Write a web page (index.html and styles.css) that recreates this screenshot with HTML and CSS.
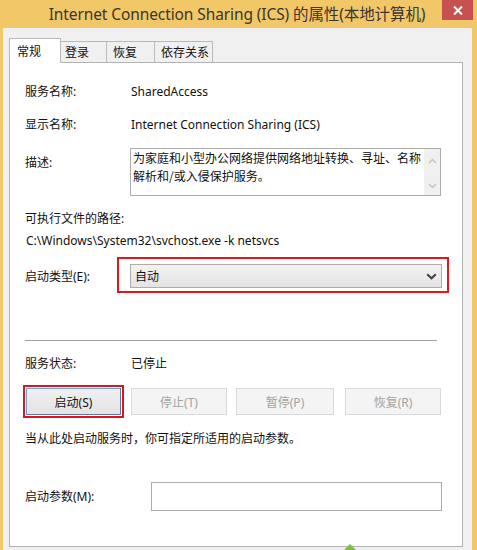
FILE: index.html
```html
<!DOCTYPE html>
<html lang="zh-CN">
<head>
<meta charset="utf-8">
<title>Internet Connection Sharing (ICS) 的属性(本地计算机)</title>
<link rel="stylesheet" href="styles.css">
</head>
<body>
<div class="window">
  <div class="titlebar">
    <div class="title">Internet Connection Sharing (ICS) 的属性(本地计算机)</div>
    <div class="close">
      <svg width="10" height="9" viewBox="0 0 10 9"><path d="M1 0.5 L9 8.5 M9 0.5 L1 8.5" stroke="#fff" stroke-width="2" fill="none"/></svg>
    </div>
  </div>
  <div class="client">
    <div class="tabs">
      <div class="tab active">常规</div>
      <div class="tab t2">登录</div>
      <div class="tab t3">恢复</div>
      <div class="tab t4">依存关系</div>
    </div>
    <div class="panel">
      <div class="row r1">
        <div class="label">服务名称:</div>
        <div class="value">SharedAccess</div>
      </div>
      <div class="row r2">
        <div class="label">显示名称:</div>
        <div class="value">Internet Connection Sharing (ICS)</div>
      </div>
      <div class="row desc-row">
        <div class="label desc-label">描述:</div>
        <div class="textbox">
          <div class="textbox-text">为家庭和小型办公网络提供网络地址转换、寻址、名称解析和/或入侵保护服务。</div>
          <div class="scrollbar">
            <svg width="9" height="6" viewBox="0 0 9 6"><path d="M1 5 L4.5 1.5 L8 5" stroke="#c4c4c4" stroke-width="1.5" fill="none"/></svg>
            <svg width="9" height="6" viewBox="0 0 9 6"><path d="M1 1 L4.5 4.5 L8 1" stroke="#c4c4c4" stroke-width="1.5" fill="none"/></svg>
          </div>
        </div>
      </div>
      <div class="line path-label">可执行文件的路径:</div>
      <div class="line path-value">C:\Windows\System32\svchost.exe -k netsvcs</div>
      <div class="row startup-row">
        <div class="label startup-label">启动类型(E):</div>
        <div class="highlight">
          <div class="select">
            <span>自动</span>
            <svg width="11" height="7" viewBox="0 0 11 7"><path d="M1.2 1.2 L5.5 5.3 L9.8 1.2" stroke="#404040" stroke-width="2" fill="none"/></svg>
          </div>
        </div>
      </div>
      <div class="separator"></div>
      <div class="row status-row">
        <div class="label">服务状态:</div>
        <div class="value">已停止</div>
      </div>
      <div class="buttons">
        <div class="btn primary">启动(S)</div>
        <div class="btn disabled b2">停止(T)</div>
        <div class="btn disabled b3">暂停(P)</div>
        <div class="btn disabled b4">恢复(R)</div>
      </div>
      <div class="line help">当从此处启动服务时，你可指定所适用的启动参数。</div>
      <div class="row param-row">
        <div class="label param-label">启动参数(M):</div>
        <div class="input"></div>
      </div>
    </div>
  </div>
  <div class="green-mark"></div>
</div>
</body>
</html>
```

FILE: styles.css
```css
html, body {
  margin: 0;
  padding: 0;
}
body {
  font-family: "Noto Sans", "Noto Sans CJK SC", sans-serif;
  font-size: 12px;
  color: #111;
}
.window {
  position: relative;
  width: 477px;
  height: 550px;
  background: #f1c768;
  display: flex;
  flex-direction: column;
  overflow: hidden;
}
.titlebar {
  height: 28px;
  flex: none;
  display: flex;
  justify-content: center;
  align-items: center;
  position: relative;
}
.title {
  font-family: "Noto Sans", "Noto Sans CJK SC", sans-serif;
  font-size: 15.5px;
  color: #3a3630;
  margin-right: 3px;
  margin-top: -1px;
  letter-spacing: -0.1px;
}
.close {
  position: absolute;
  right: 4px;
  top: 0;
  width: 31px;
  height: 20px;
  background: #c75050;
  display: flex;
  align-items: center;
  justify-content: center;
}
.client {
  flex: 1;
  margin: 0 5px 0 3px;
  background: #f0f0f0;
  padding: 10px 9px 3px 6px;
  display: flex;
  flex-direction: column;
}
.tabs {
  height: 24px;
  flex: none;
  display: flex;
  align-items: flex-end;
}
.tab {
  box-sizing: border-box;
  height: 21px;
  line-height: 19px;
  border: 1px solid #b9b9b9;
  border-left: none;
  border-bottom: none;
  background: #f0f0f0;
  color: #111;
  font-family: "Noto Sans CJK SC", sans-serif;
}
.tab.active {
  height: 25px;
  width: 52px;
  line-height: 23px;
  padding-left: 7px;
  border-left: 1px solid #b9b9b9;
  background: #fff;
  position: relative;
  z-index: 1;
  margin-bottom: -1px;
}
.t2 { width: 46px; padding-left: 4px; }
.t3 { width: 48px; padding-left: 6px; }
.t4 { width: 58px; padding-left: 6px; }
.panel {
  flex: 1;
  background: #fff;
  border: 1px solid #b3b3b3;
  padding: 0 0 0 15px;
  display: flex;
  flex-direction: column;
}
.row {
  display: flex;
  align-items: center;
  height: 20px;
  line-height: 20px;
}
.line {
  height: 20px;
  line-height: 20px;
}
.label {
  width: 106px;
  flex: none;
  font-family: "Noto Sans", "Noto Sans CJK SC", sans-serif;
}
.r1 { margin-top: 19px; }
.r2 { margin-top: 13px; }
.desc-row {
  margin-top: 13px;
  height: 48px;
  align-items: flex-start;
}
.desc-label {
  padding-top: 5px;
}
.textbox {
  box-sizing: border-box;
  width: 311px;
  height: 48px;
  border: 1px solid #acacac;
  display: flex;
  margin-left: -1px;
}
.textbox-text {
  flex: 1;
  padding: 0 0 0 2px;
  line-height: 18px;
  font-family: "Noto Sans CJK SC", sans-serif;
}
.scrollbar {
  width: 16px;
  flex: none;
  background: #f0f0f0;
  display: flex;
  flex-direction: column;
  align-items: center;
  justify-content: space-between;
  padding: 9px 0 6px;
  box-sizing: border-box;
}
.path-label { margin-top: 13px; }
.path-value { margin-top: 2px; padding-left: 1px; }
.startup-row {
  margin-top: 6px;
  height: 36px;
}
.startup-label { width: 92px; padding-top: 3px; }
.highlight {
  box-sizing: border-box;
  width: 332px;
  height: 36px;
  border: 2px solid #e8141c;
  padding: 5px 5px 3px 11px;
}
.select {
  box-sizing: border-box;
  height: 24px;
  border: 1px solid #acacac;
  background: linear-gradient(#f2f2f2, #e4e4e4);
  display: flex;
  align-items: center;
  justify-content: space-between;
  padding: 0 4px 0 4px;
  font-family: "Noto Sans CJK SC", sans-serif;
  line-height: 20px;
}
.separator {
  margin-top: 47px;
  width: 412px;
  height: 1px;
  background: #a0a0a0;
  flex: none;
}
.status-row { margin-top: 13px; }
.buttons {
  margin-top: 14px;
  display: flex;
  height: 27px;
  padding-left: 1px;
}
.btn {
  box-sizing: border-box;
  height: 27px;
  display: flex;
  align-items: center;
  justify-content: center;
  font-family: "Noto Sans", "Noto Sans CJK SC", sans-serif;
}
.btn.primary {
  width: 95px;
  border: 1px solid #6fa6d8;
  border-right-color: #5d7a97;
  border-bottom-color: #5d7a97;
  background: linear-gradient(#f0f0f0, #e3e3e3);
  outline: 2px solid #e0141e;
  outline-offset: 1px;
}
.btn.disabled {
  border: 1px solid #d9d9d9;
  background: #f4f4f4;
  color: #a3a3a3;
}
.b2 { width: 96px; margin-left: 10px; }
.b3 { width: 98px; margin-left: 9px; }
.b4 { width: 96px; margin-left: 11px; }
.help { margin-top: 14px; }
.param-row {
  margin-top: 33px;
  height: 29px;
}
.param-label { width: 126px; }
.input {
  box-sizing: border-box;
  width: 291px;
  height: 29px;
  border: 1px solid #acacac;
  background: #fff;
}
.green-mark {
  position: absolute;
  left: 345px;
  top: 546px;
  width: 10px;
  height: 10px;
  background: #7cc23a;
  transform: rotate(45deg);
}
```
